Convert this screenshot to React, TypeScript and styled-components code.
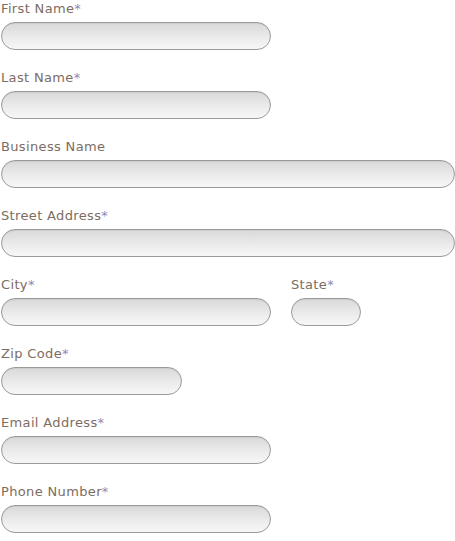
import styled, { createGlobalStyle } from "styled-components";

const GlobalStyle = createGlobalStyle`
  html, body {
    margin: 0;
    padding: 0;
    background: #fff;
  }
`;

type Size = "full" | "wide" | "zip" | "state";

const widths: Record<Size, number> = {
  full: 454,
  wide: 270,
  zip: 181,
  state: 70,
};

const fields: { label: string; required: boolean; size: Size }[] = [
  { label: "First Name", required: true, size: "wide" },
  { label: "Last Name", required: true, size: "wide" },
  { label: "Business Name", required: false, size: "full" },
  { label: "Street Address", required: true, size: "full" },
];

const tail: { label: string; required: boolean; size: Size }[] = [
  { label: "Zip Code", required: true, size: "zip" },
  { label: "Email Address", required: true, size: "wide" },
  { label: "Phone Number", required: true, size: "wide" },
];

const Field = ({
  label,
  required,
  size,
}: {
  label: string;
  required: boolean;
  size: Size;
}) => (
  <FieldBox>
    <Label>
      {label}
      {required && <Star>*</Star>}
    </Label>
    <Input type="text" $size={size} />
  </FieldBox>
);

const App = () => (
  <>
    <GlobalStyle />
    <Form>
      {fields.map((f) => (
        <Field key={f.label} {...f} />
      ))}
      <Row>
        <Field label="City" required size="wide" />
        <Field label="State" required size="state" />
      </Row>
      {tail.map((f) => (
        <Field key={f.label} {...f} />
      ))}
    </Form>
  </>
);

export default App;

const Form = styled.form`
  padding: 0 0 0 1px;
  font-family: "DejaVu Sans", Verdana, sans-serif;
  width: 455px;
  overflow: hidden;
`;

const Row = styled.div`
  display: flex;
  gap: 20px;
`;

const FieldBox = styled.div`
  display: flex;
  flex-direction: column;
  align-items: flex-start;
`;

const Label = styled.label`
  display: block;
  font-size: 13px;
  line-height: 16px;
  letter-spacing: 0.35px;
  color: #7d6c62;
  margin: 1px 0 5px;
`;

const Star = styled.span`
  color: #8a8ab8;
`;

const Input = styled.input<{ $size: Size }>`
  box-sizing: border-box;
  width: ${(p) => widths[p.$size]}px;
  height: 28px;
  margin: 0 0 19px;
  padding: 0 10px;
  border: 1px solid #9a9a9a;
  border-radius: 14px;
  background: linear-gradient(to bottom, #d9d9d9 0%, #ebebeb 55%, #f7f7f7 100%);
  box-shadow: inset 0 1px 1px rgba(0, 0, 0, 0.06);
  outline: none;
  font-family: "DejaVu Sans", Verdana, sans-serif;
  font-size: 13px;
`;
